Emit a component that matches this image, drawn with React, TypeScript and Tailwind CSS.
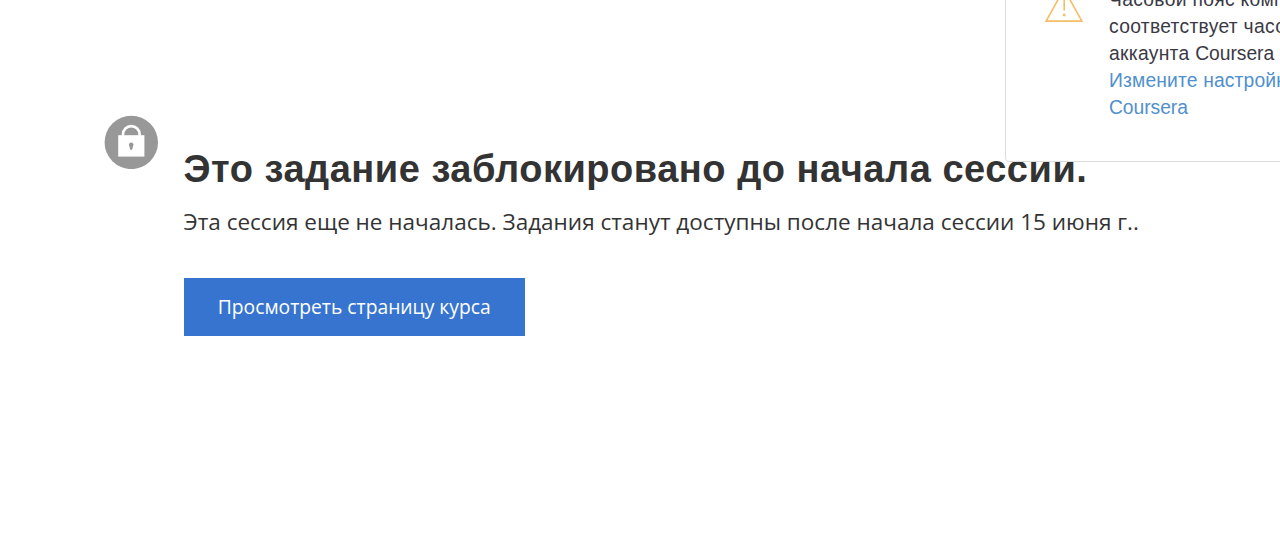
const noticeLines = [
  "Часовой пояс компьютера не",
  "соответствует часовому поясу",
];

function LockIcon() {
  return (
    <svg viewBox="0 0 54 54" className="h-[54px] w-[54px] shrink-0" aria-hidden="true">
      <circle cx="27.3" cy="27.4" r="26.7" fill="#989898" />
      <path
        d="M19 21v-1.6a8.3 8.3 0 0 1 16.6 0V21"
        fill="none"
        stroke="#fff"
        strokeWidth="2.6"
      />
      <rect x="14.2" y="20.2" width="26.2" height="21.4" fill="#fff" />
      <path d="M27.2 27.4a2.3 2.3 0 0 1 1.9 3.6l-1 3.8h-1.8l-1-3.8a2.3 2.3 0 0 1 1.9-3.6z" fill="#989898" />
    </svg>
  );
}

function WarningIcon() {
  return (
    <svg
      viewBox="0 0 38 34"
      className="h-[34px] w-[38px] shrink-0"
      fill="none"
      stroke="#f5bd66"
      strokeWidth="1.6"
      aria-hidden="true"
    >
      <path d="M19 1 36.9 33.1H1.1z" />
      <path d="M19.2 12v10.5" />
      <circle cx="19.2" cy="27" r="1.4" fill="#f5bd66" stroke="none" />
    </svg>
  );
}

function TimezoneNotice() {
  return (
    <aside className="absolute -top-10 left-[1005px] flex h-[202px] w-[420px] gap-[26px] rounded border border-[#dcdcdc] bg-white pt-[27px] pl-[39px] font-['Liberation_Sans',Arial,sans-serif] text-[19.3px] leading-[27.2px] whitespace-nowrap text-[#3a3a44]">
      <WarningIcon />
      <div className="-mt-[2.5px] tracking-[0.3px]">
        {noticeLines.map((line) => (
          <p key={line}>{line}</p>
        ))}
        <p>
          аккаунта <span className="tracking-[-0.05px]">Coursera</span>
        </p>
        <a href="#settings" className="block text-[#5090cc]">
          <span className="tracking-[0.15px]">Измените настройки</span>
          <br />
          <span className="tracking-[-0.05px]">Coursera</span>
        </a>
      </div>
    </aside>
  );
}

export default function App() {
  return (
    <div className="relative h-[536px] w-full overflow-hidden bg-white font-['Open_Sans',sans-serif] text-[#333]">
      <main className="flex gap-[25.5px] pt-[115px] pl-[104px]">
        <LockIcon />
        <div className="pt-[30px] whitespace-nowrap">
          <h1 className="font-['Liberation_Sans',Arial,sans-serif] text-[38px] leading-[48px] font-bold tracking-[0.52px]">
            Это задание заблокировано до начала сессии.
          </h1>
          <p className="mt-[13px] text-[22.53px] leading-8">
            Эта сессия еще не началась. Задания станут доступны после начала сессии 15 июня г..
          </p>
          <button className="mt-10 h-[58px] w-[341.5px] bg-[#3774cf] text-[19.3px] text-white">
            Просмотреть страницу курса
          </button>
        </div>
      </main>
      <TimezoneNotice />
    </div>
  );
}
